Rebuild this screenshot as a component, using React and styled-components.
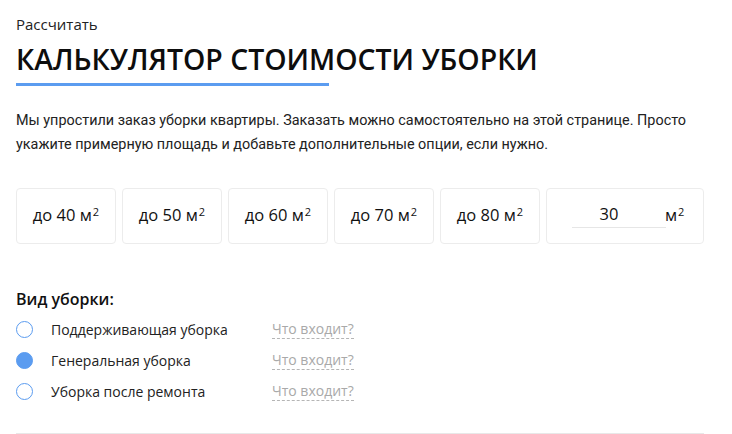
import React, { useState } from 'react'
import styled, { createGlobalStyle } from 'styled-components'

// GLOBAL //
const GlobalStyle = createGlobalStyle`
  * { box-sizing: border-box; }
  body {
    margin: 0;
    background: #fff;
    color: #111;
    font-family: "Open Sans", "Noto Sans", sans-serif;
  }
`;

// STYLES //
const Page = styled.div`
  width: 732px;
  height: 434px;
  padding: 14px 28px 0 16px;
  overflow: hidden;
`;
const Crumb = styled.div`
  font-size: 15px;
  line-height: 20px;
  color: #222;
`;
const Heading = styled.h1`
  margin: 7px 0 0;
  font-size: 28.4px;
  font-weight: 600;
  line-height: 36px;
  color: #0d0d0d;
  display: inline-block;
  position: relative;
  padding-bottom: 9px;
  &::after {
    content: '';
    position: absolute;
    left: 0;
    bottom: 0;
    width: 313px;
    height: 3px;
    background: #5b9cf0;
  }
`;
const Intro = styled.p`
  margin: 23px 0 0;
  font-family: "Roboto", sans-serif;
  font-size: 14.4px;
  line-height: 24px;
  color: #222;
  max-width: 690px;
`;
const Sizes = styled.div`
  display: grid;
  grid-template-columns: repeat(5, 100px) 158px;
  gap: 6px;
  margin-top: 31px;
`;
const SizeCard = styled.button`
  height: 56px;
  padding: 0 0 3px;
  border: 1px solid #ececec;
  border-radius: 4px;
  background: #fff;
  font-family: inherit;
  font-size: 16.5px;
  line-height: 20px;
  color: #111;
  display: flex;
  align-items: center;
  justify-content: center;
  cursor: pointer;
`;
const Label = styled.span`
  white-space: nowrap;
`;
const Sup = styled.span`
  font-size: 11px;
  line-height: 1;
  margin-left: 1px;
  vertical-align: baseline;
  position: relative;
  top: -5px;
`;
const InputCard = styled.div`
  height: 56px;
  border: 1px solid #ececec;
  border-radius: 4px;
  display: flex;
  align-items: center;
  padding: 0 0 3px 25px;
`;
const AreaInput = styled.input`
  width: 94px;
  border: none;
  border-bottom: 1px solid #e6e6e6;
  outline: none;
  font-family: inherit;
  font-size: 16.5px;
  text-align: center;
  padding: 0 20px 2px 0;
  color: #111;
`;
const Unit = styled.span`
  margin-left: -1px;
  font-size: 16.5px;
  line-height: 20px;
  color: #111;
`;
const SectionTitle = styled.h3`
  margin: 44px 0 0;
  font-size: 16px;
  font-weight: 600;
  line-height: 22px;
`;
const Options = styled.div`
  display: flex;
  flex-direction: column;
  margin-top: 4px;
`;
const Option = styled.label`
  display: grid;
  grid-template-columns: 35px 221px auto;
  align-items: center;
  height: 31px;
  font-size: 14px;
  color: #222;
  cursor: pointer;
`;
const Radio = styled.span`
  width: 17px;
  height: 17px;
  border-radius: 50%;
  border: 1.5px solid #5b9cf0;
  background: ${p => (p.$checked ? '#5b9cf0' : '#fff')};
`;
const More = styled.span`
  justify-self: start;
  color: #a9a9a9;
  font-size: 14px;
  border-bottom: 1px dashed #b5b5b5;
  line-height: 18px;
`;
const Divider = styled.hr`
  margin: 26px 0 0;
  border: none;
  border-top: 1px solid #e8e8e8;
`;

const sizes = [40, 50, 60, 70, 80];
const kinds = [
  'Поддерживающая уборка',
  'Генеральная уборка',
  'Уборка после ремонта',
];

// COMPONENT //
const App = () => {
  const [area, setArea] = useState('30');
  const [kind, setKind] = useState(1);
  return (
    <>
      <GlobalStyle />
      <Page>
        <Crumb>Рассчитать</Crumb>
        <Heading>КАЛЬКУЛЯТОР СТОИМОСТИ УБОРКИ</Heading>
        <Intro>
          Мы упростили заказ уборки квартиры. Заказать можно самостоятельно на этой странице. Просто
          укажите примерную площадь и добавьте дополнительные опции, если нужно.
        </Intro>
        <Sizes>
          {sizes.map(s => (
            <SizeCard key={s} onClick={() => setArea(String(s))}>
              <Label>до {s} м<Sup>2</Sup></Label>
            </SizeCard>
          ))}
          <InputCard>
            <AreaInput value={area} onChange={e => setArea(e.target.value)} />
            <Unit>м<Sup>2</Sup></Unit>
          </InputCard>
        </Sizes>
        <SectionTitle>Вид уборки:</SectionTitle>
        <Options>
          {kinds.map((k, i) => (
            <Option key={k} onClick={() => setKind(i)}>
              <Radio $checked={kind === i} />
              <span>{k}</span>
              <More>Что входит?</More>
            </Option>
          ))}
        </Options>
        <Divider />
      </Page>
    </>
  );
};

export default App;
